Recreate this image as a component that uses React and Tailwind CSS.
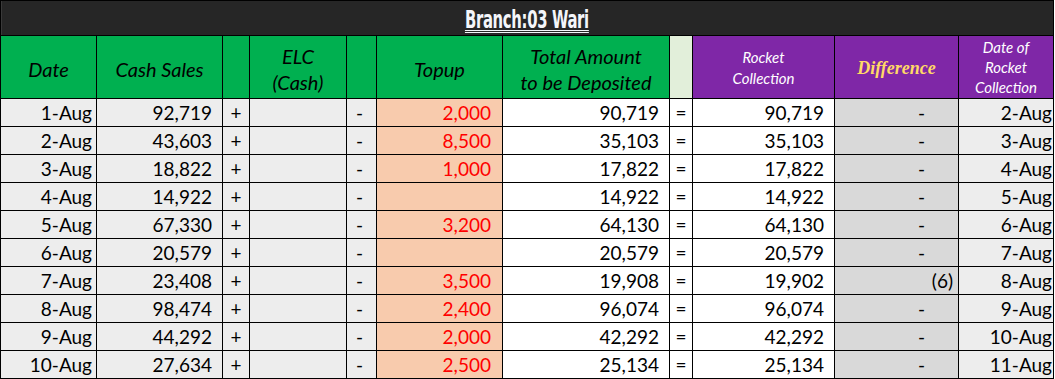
import React from 'react';

const rows = [
  { date: '1-Aug', cash: '92,719', topup: '2,000', total: '90,719', rocket: '90,719', diff: '-', rdate: '2-Aug' },
  { date: '2-Aug', cash: '43,603', topup: '8,500', total: '35,103', rocket: '35,103', diff: '-', rdate: '3-Aug' },
  { date: '3-Aug', cash: '18,822', topup: '1,000', total: '17,822', rocket: '17,822', diff: '-', rdate: '4-Aug' },
  { date: '4-Aug', cash: '14,922', topup: '', total: '14,922', rocket: '14,922', diff: '-', rdate: '5-Aug' },
  { date: '5-Aug', cash: '67,330', topup: '3,200', total: '64,130', rocket: '64,130', diff: '-', rdate: '6-Aug' },
  { date: '6-Aug', cash: '20,579', topup: '', total: '20,579', rocket: '20,579', diff: '-', rdate: '7-Aug' },
  { date: '7-Aug', cash: '23,408', topup: '3,500', total: '19,908', rocket: '19,902', diff: '(6)', rdate: '8-Aug' },
  { date: '8-Aug', cash: '98,474', topup: '2,400', total: '96,074', rocket: '96,074', diff: '-', rdate: '9-Aug' },
  { date: '9-Aug', cash: '44,292', topup: '2,000', total: '42,292', rocket: '42,292', diff: '-', rdate: '10-Aug' },
  { date: '10-Aug', cash: '27,634', topup: '2,500', total: '25,134', rocket: '25,134', diff: '-', rdate: '11-Aug' },
];

// column widths incl. right border
const W = {
  date: 'w-[96px]',
  cash: 'w-[126px]',
  plus: 'w-[27px]',
  elc: 'w-[97px]',
  minus: 'w-[30px]',
  topup: 'w-[126px]',
  total: 'w-[167px]',
  eq: 'w-[23px]',
  rocket: 'w-[142px]',
  diff: 'w-[124px]',
  rdate: 'w-[95px]',
};

const Cell = ({ w, className = '', children }) => (
  <div className={`${w} shrink-0 h-full border-r border-black flex items-center ${className}`}>
    {children}
  </div>
);

export default function App() {
  return (
    <div className="w-[1055px] h-[379px] bg-white font-['Lato','Open_Sans',sans-serif] text-black overflow-hidden">
      <div className="w-[1054px] border-l border-black">
        {/* title */}
        <div className="h-[36px] bg-[#262626] border-t border-b border-r border-black flex items-center justify-center shadow-[inset_1px_0_0_#3a3a3a]">
          <span className="font-['DejaVu_Sans_Condensed','Liberation_Sans_Narrow',sans-serif] font-bold text-[25px] leading-none text-[#f4f6fa] underline decoration-double decoration-1 underline-offset-[2px] scale-x-[0.66] inline-block tracking-[-0.5px] pt-0.5">
            Branch:03 Wari
          </span>
        </div>

        {/* header */}
        <div className="h-[63px] flex border-b border-black italic text-[20px] leading-[26px]">
          <Cell w={W.date} className="bg-[#00b050] justify-center pt-1">Date</Cell>
          <Cell w={W.cash} className="bg-[#00b050] justify-center pt-1">Cash Sales</Cell>
          <Cell w={W.plus} className="bg-[#00b050]" />
          <Cell w={W.elc} className="bg-[#00b050] justify-center text-center pt-1">ELC<br />(Cash)</Cell>
          <Cell w={W.minus} className="bg-[#00b050]" />
          <Cell w={W.topup} className="bg-[#00b050] justify-center pt-1">Topup</Cell>
          <Cell w={W.total} className="bg-[#00b050] justify-center text-center pt-1">Total Amount<br />to be Deposited</Cell>
          <Cell w={W.eq} className="bg-[#e2efda]" />
          <Cell w={W.rocket} className="bg-[#7f27a7] justify-center text-center text-white text-[15px] leading-[21px] pt-0.5">Rocket<br />Collection</Cell>
          <Cell w={W.diff} className="bg-[#7f27a7] justify-center pt-0.5">
            <span className="font-['Liberation_Serif',serif] font-bold text-[18px] text-[#ffd966]">Difference</span>
          </Cell>
          <Cell w={W.rdate} className="bg-[#7f27a7] justify-center text-center text-white text-[15px] leading-[20px]">Date of<br />Rocket<br />Collection</Cell>
        </div>

        {/* body */}
        {rows.map((r) => (
          <div key={r.date} className="h-[28px] flex border-b border-black text-[19px] leading-none">
            <Cell w={W.date} className="bg-[#ededed] justify-end pr-1">{r.date}</Cell>
            <Cell w={W.cash} className="bg-[#ededed] justify-end pr-[10px]">{r.cash}</Cell>
            <Cell w={W.plus} className="bg-[#ededed] justify-center">+</Cell>
            <Cell w={W.elc} className="bg-[#ededed]" />
            <Cell w={W.minus} className="bg-[#ededed] justify-center pr-1">-</Cell>
            <Cell w={W.topup} className="bg-[#f8cbad] justify-end pr-[11px] text-[#ff0000]">{r.topup}</Cell>
            <Cell w={W.total} className="bg-white justify-end pr-[10px]">{r.total}</Cell>
            <Cell w={W.eq} className="bg-white justify-center">=</Cell>
            <Cell w={W.rocket} className="bg-white justify-end pr-[10px]">{r.rocket}</Cell>
            <Cell w={W.diff} className={`bg-[#d9d9d9] justify-end ${r.diff === '-' ? 'pr-[33px]' : 'pr-[5px]'}`}>{r.diff}</Cell>
            <Cell w={W.rdate} className="bg-[#ededed] justify-end pr-px">{r.rdate}</Cell>
          </div>
        ))}
      </div>
    </div>
  );
}
